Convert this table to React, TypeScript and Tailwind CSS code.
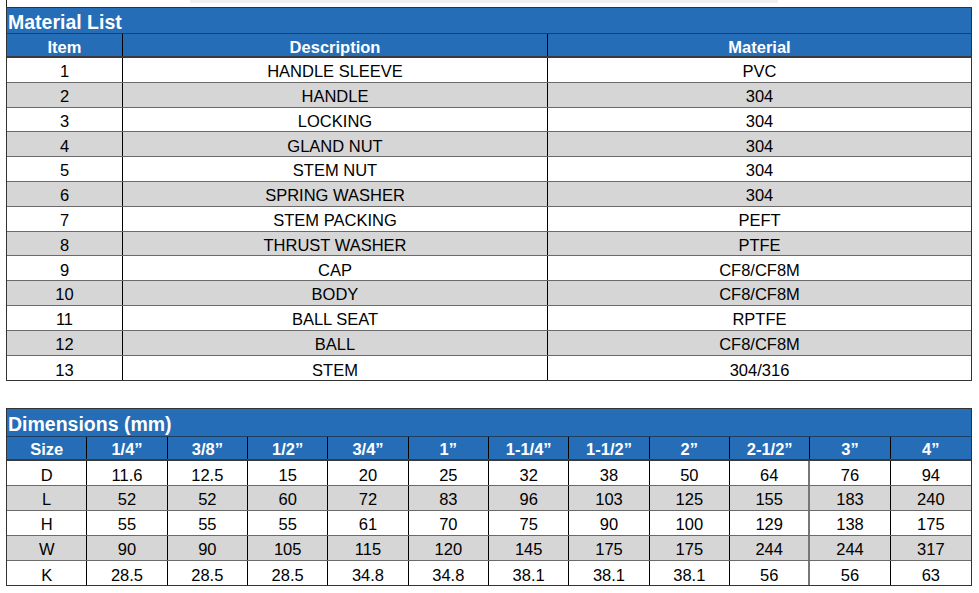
import React from 'react';

const materials: [string, string][] = [
  ['HANDLE SLEEVE', 'PVC'],
  ['HANDLE', '304'],
  ['LOCKING', '304'],
  ['GLAND NUT', '304'],
  ['STEM NUT', '304'],
  ['SPRING WASHER', '304'],
  ['STEM PACKING', 'PEFT'],
  ['THRUST WASHER', 'PTFE'],
  ['CAP', 'CF8/CF8M'],
  ['BODY', 'CF8/CF8M'],
  ['BALL SEAT', 'RPTFE'],
  ['BALL', 'CF8/CF8M'],
  ['STEM', '304/316'],
];

const sizes = ['1/4\u201d', '3/8\u201d', '1/2\u201d', '3/4\u201d', '1\u201d', '1-1/4\u201d', '1-1/2\u201d', '2\u201d', '2-1/2\u201d', '3\u201d', '4\u201d'];

const dims: [string, string[]][] = [
  ['D', ['11.6', '12.5', '15', '20', '25', '32', '38', '50', '64', '76', '94']],
  ['L', ['52', '52', '60', '72', '83', '96', '103', '125', '155', '183', '240']],
  ['H', ['55', '55', '55', '61', '70', '75', '90', '100', '129', '138', '175']],
  ['W', ['90', '90', '105', '115', '120', '145', '175', '175', '244', '244', '317']],
  ['K', ['28.5', '28.5', '28.5', '34.8', '34.8', '38.1', '38.1', '38.1', '56', '56', '63']],
];

const font = { fontFamily: '"Liberation Sans", Arial, sans-serif' };

export default function App() {
  return (
    <div className="w-[979px] h-[593px] bg-white overflow-hidden relative" style={font}>
      {/* bits of the sheet above the first table */}
      <div className="absolute left-[190px] top-0 w-[588px] h-[3px] bg-[#f0f0f0]" />
      <div className="absolute left-[6px] top-0 w-px h-[7px] bg-[#222]" />

      <div className="pl-[6px] pt-[7px]">
        {/* Material List */}
        <div className="w-[966px] border border-[#333]">
          <div className="h-[25px] bg-[#256db6] flex items-end pl-[1px] pb-[1px]">
            <span className="text-white font-bold text-[19.5px] leading-none">Material List</span>
          </div>
          <div className="grid grid-cols-[116px_425px_1fr] h-[25px] bg-[#256db6] border-t border-[#1c3f66] border-b-2 border-b-[#3a3a3a]">
            <div className="flex items-end justify-center text-white font-bold text-[16.5px] leading-none pb-[1px] border-r border-black">Item</div>
            <div className="flex items-end justify-center text-white font-bold text-[16.5px] leading-none pb-[1px] border-r border-black">Description</div>
            <div className="flex items-end justify-center text-white font-bold text-[16.5px] leading-none pb-[1px]">Material</div>
          </div>
          {materials.map(([desc, mat], i) => (
            <div
              key={desc}
              className={`grid grid-cols-[116px_425px_1fr] h-[24.8px] text-[16.5px] leading-none text-black ${i % 2 === 1 ? 'bg-[#d6d6d6]' : 'bg-white'} ${i < materials.length - 1 ? 'border-b border-[#6a6a6a]' : ''}`}
            >
              <div className="flex items-end justify-center pb-[2px] border-r border-black">{i + 1}</div>
              <div className="flex items-end justify-center pb-[2px] border-r border-black">{desc}</div>
              <div className="flex items-end justify-center pb-[2px]">{mat}</div>
            </div>
          ))}
        </div>

        {/* Dimensions */}
        <div className="w-[966px] mt-[27px] border border-[#333]">
          <div className="h-[27px] bg-[#256db6] flex items-end pl-[1px] pb-[2px]">
            <span className="text-white font-bold text-[19.5px] leading-none">Dimensions (mm)</span>
          </div>
          <div className="grid grid-cols-12 h-[25px] bg-[#256db6] border-t border-[#1c3f66] border-b-2 border-b-[#3a3a3a]">
            {['Size', ...sizes].map((s, i) => (
              <div
                key={s}
                className={`flex items-end justify-center text-white font-bold text-[16.5px] leading-none pb-[2px] ${i < 11 ? 'border-r border-black' : ''}`}
              >
                {s}
              </div>
            ))}
          </div>
          {dims.map(([label, vals], r) => (
            <div
              key={label}
              className={`grid grid-cols-12 h-[24.8px] text-[16.5px] leading-none text-black ${r % 2 === 1 ? 'bg-[#d6d6d6]' : 'bg-white'} ${r < dims.length - 1 ? 'border-b border-[#6a6a6a]' : ''}`}
            >
              {[label, ...vals].map((v, i) => (
                <div
                  key={i}
                  className={`flex items-end justify-center pb-[2px] ${i < 11 ? (i === 9 ? 'border-r-2 border-[#777]' : 'border-r border-black') : ''}`}
                >
                  {v}
                </div>
              ))}
            </div>
          ))}
        </div>
      </div>
    </div>
  );
}
